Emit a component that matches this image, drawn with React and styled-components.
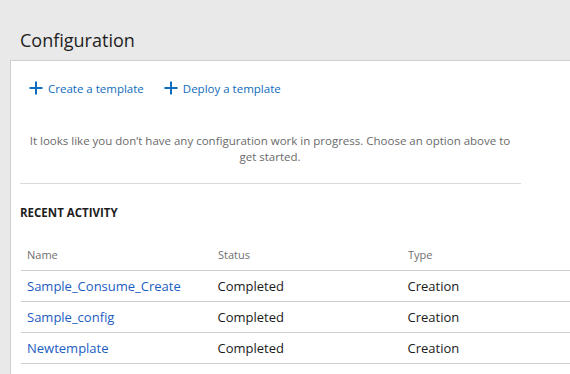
import React from 'react';
import styled, {createGlobalStyle} from 'styled-components';

const GlobalStyle = createGlobalStyle`
  html, body {
    margin: 0;
    padding: 0;
    background: #e9e9e9;
    font-family: "Segoe UI", "Open Sans", "Noto Sans", sans-serif;
  }
  #root {
    min-height: 374px;
    display: flex;
    flex-direction: column;
  }
`

const Page = styled.div`
  display: flex;
  flex-direction: column;
  flex: 1;
  min-height: 374px;
`

const Title = styled.h1`
  margin: 0;
  height: 60px;
  box-sizing: border-box;
  padding: 28px 0 0 20px;
  font-size: 18px;
  font-weight: 400;
  line-height: 24px;
  color: #1e1e1e;
`

const Panel = styled.section`
  flex: 1;
  margin-left: 10px;
  background: #fff;
  border-top: 1px solid #cfcfcf;
  border-left: 1px solid #cfcfcf;
  padding: 0 0 0 10px;
`

const Actions = styled.div`
  display: flex;
  align-items: center;
  gap: 20px;
  height: 54px;
  padding: 0 0 0 8px;
`

const ActionLink = styled.a`
  display: flex;
  align-items: center;
  gap: 5px;
  color: #0f6cbd;
  font-size: 11.5px;
  text-decoration: none;
  cursor: pointer;
`

const Empty = styled.p`
  width: 500px;
  margin: 18px 0 0 -1px;
  text-align: center;
  color: #6a6a6a;
  font-size: 11.5px;
  line-height: 16px;
`

const Divider = styled.hr`
  width: 501px;
  margin: 18px 0 0 -1px;
  border: none;
  border-top: 1px solid #dadada;
`

const SectionTitle = styled.h2`
  margin: 21px 0 0 -1px;
  font-size: 11.5px;
  font-weight: 700;
  line-height: 16px;
  color: #1e1e1e;
`

const Table = styled.table`
  width: 100%;
  margin-top: 18px;
  border-collapse: collapse;
`

const Th = styled.th`
  width: ${p => p.w ? p.w + 'px' : 'auto'};
  height: 31px;
  padding: 0 6px;
  text-align: left;
  font-size: 11px;
  font-weight: 400;
  color: #6f6f6f;
  border-bottom: 1px solid #cfcfcf;
  border-left: ${p => p.first ? 'none' : '1px solid #fff'};
`

const Td = styled.td`
  height: 30px;
  padding: 0 6px;
  font-size: 13px;
  color: ${p => p.link ? '#1c5dc2' : '#1a1a1a'};
  border-bottom: 1px solid #cfcfcf;
`

const PlusIcon = () => (
  <svg width="14" height="14" viewBox="0 0 14 14">
    <path d="M7 0.5v13M0.5 7h13" stroke="#0f6cbd" strokeWidth="2" fill="none"/>
  </svg>
)

const rows = [
  {name: 'Sample_Consume_Create', status: 'Completed', type: 'Creation'},
  {name: 'Sample_config', status: 'Completed', type: 'Creation'},
  {name: 'Newtemplate', status: 'Completed', type: 'Creation'},
]

const App = () => {
  return (
    <Page>
      <GlobalStyle/>
      <Title>Configuration</Title>
      <Panel>
        <Actions>
          <ActionLink><PlusIcon/>Create a template</ActionLink>
          <ActionLink><PlusIcon/>Deploy a template</ActionLink>
        </Actions>
        <Empty>
          It looks like you don’t have any configuration work in progress. Choose an option above to get started.
        </Empty>
        <Divider/>
        <SectionTitle>RECENT ACTIVITY</SectionTitle>
        <Table>
          <thead>
            <tr>
              <Th first w={178}>Name</Th>
              <Th w={177}>Status</Th>
              <Th>Type</Th>
            </tr>
          </thead>
          <tbody>
            {rows.map(r => (
              <tr key={r.name}>
                <Td link>{r.name}</Td>
                <Td>{r.status}</Td>
                <Td>{r.type}</Td>
              </tr>
            ))}
          </tbody>
        </Table>
      </Panel>
    </Page>
  );
}

export default App;
